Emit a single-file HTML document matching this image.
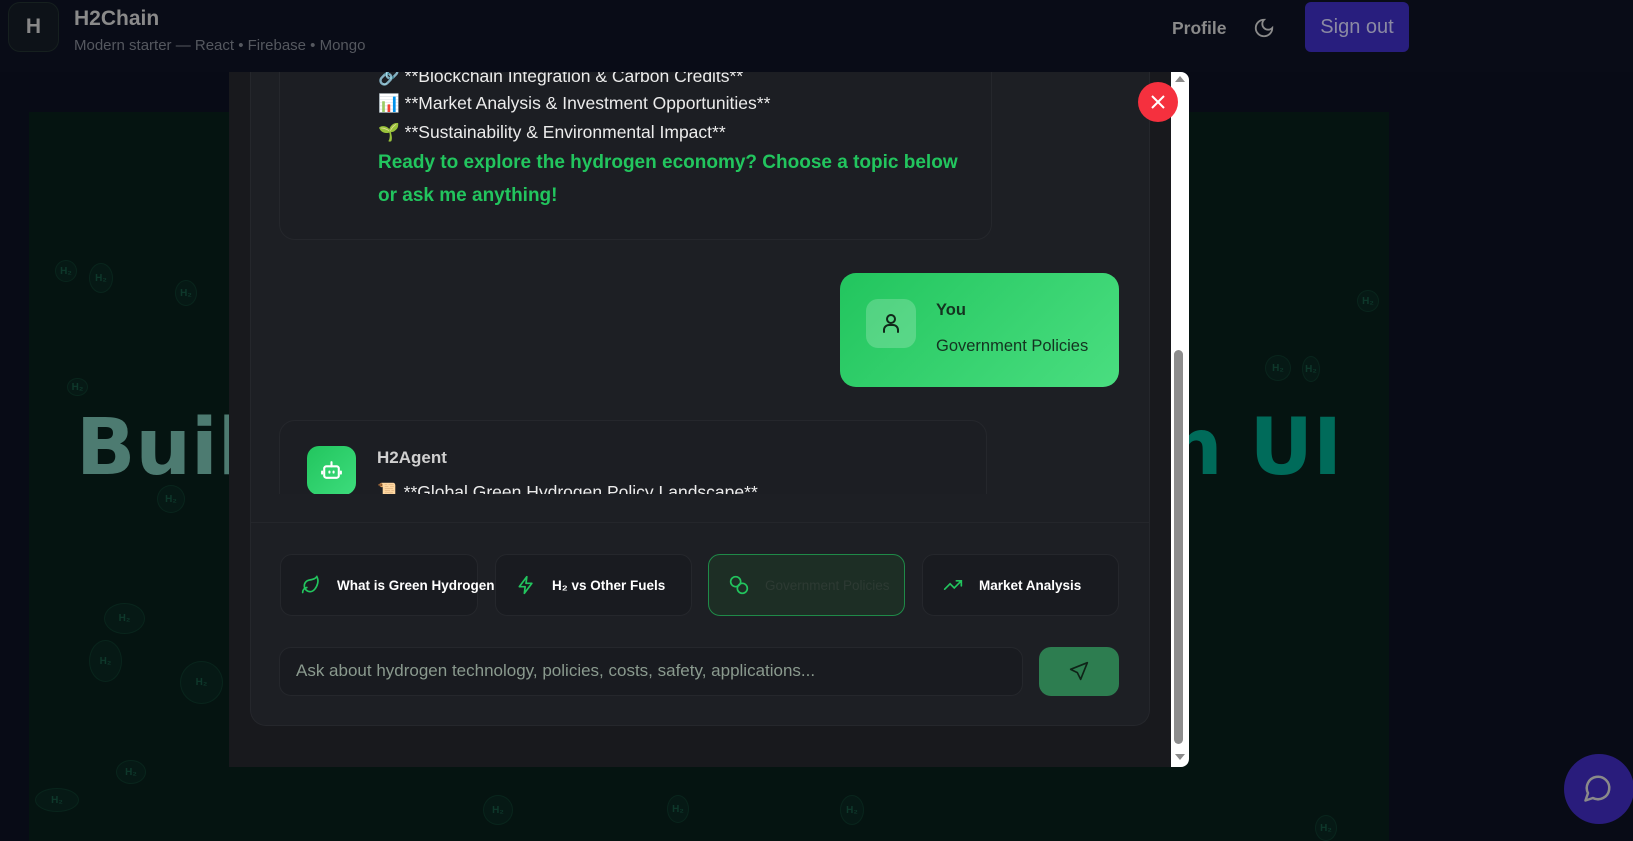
<!DOCTYPE html>
<html><head><meta charset="utf-8"><style>
*{box-sizing:border-box;margin:0;padding:0}
body{width:1633px;height:841px;overflow:hidden;background:#080b16;font-family:"Liberation Sans",sans-serif;position:relative}
.abs{position:absolute}
.hero{left:29px;top:112px;width:1360px;height:729px;background:#051411}
.title{top:409px;font-size:78px;font-weight:900;white-space:nowrap;line-height:1;font-family:"DejaVu Sans","Liberation Sans",sans-serif}
.bub{border:1px solid rgba(40,140,100,.1);background:rgba(20,80,60,.1);border-radius:50%;color:rgba(40,150,110,.25);font-size:10px;font-weight:bold;display:flex;align-items:center;justify-content:center}
.header{left:0;top:0;width:1633px;height:72px;background:#090c17}
.card{background:#1c1e23;border:1px solid #25272c;border-radius:16px}
.t{color:#ececec;font-size:17.5px;position:absolute;left:378px;white-space:nowrap}
.g{color:#22c55e;font-size:19px;font-weight:bold;position:absolute;left:378px;white-space:nowrap}
.chip{top:554px;height:62px;border:1px solid #25272c;border-radius:12px;background:#191b20;display:flex;align-items:center;padding-left:20px;color:#fff;font-size:13.5px;font-weight:bold;white-space:nowrap}
.chip svg{margin-right:16px;flex:none}
</style></head><body>
<div class="abs hero"></div>
<div class="abs title" style="left:76px;color:#4d7b71">Build Your Own</div>
<div class="abs title" style="right:291px;color:#006b5a">Green UI</div>
<div class="abs bub" style="left:67px;top:378px;width:21px;height:18px">H₂</div>
<div class="abs bub" style="left:104px;top:603px;width:41px;height:31px">H₂</div>
<div class="abs bub" style="left:89px;top:640px;width:33px;height:42px">H₂</div>
<div class="abs bub" style="left:180px;top:661px;width:43px;height:43px">H₂</div>
<div class="abs bub" style="left:116px;top:760px;width:30px;height:24px">H₂</div>
<div class="abs bub" style="left:35px;top:788px;width:44px;height:24px">H₂</div>
<div class="abs bub" style="left:157px;top:485px;width:28px;height:28px">H₂</div>
<div class="abs bub" style="left:55px;top:260px;width:22px;height:22px">H₂</div>
<div class="abs bub" style="left:89px;top:263px;width:24px;height:30px">H₂</div>
<div class="abs bub" style="left:175px;top:280px;width:22px;height:26px">H₂</div>
<div class="abs bub" style="left:1357px;top:290px;width:22px;height:22px">H₂</div>
<div class="abs bub" style="left:1265px;top:355px;width:26px;height:26px">H₂</div>
<div class="abs bub" style="left:1302px;top:356px;width:18px;height:26px">H₂</div>
<div class="abs bub" style="left:667px;top:795px;width:22px;height:28px">H₂</div>
<div class="abs bub" style="left:840px;top:795px;width:24px;height:30px">H₂</div>
<div class="abs bub" style="left:483px;top:795px;width:30px;height:30px">H₂</div>
<div class="abs bub" style="left:1315px;top:815px;width:22px;height:26px">H₂</div>

<div class="abs header"></div>
<div class="abs" style="left:8px;top:2px;width:51px;height:50px;border-radius:12px;background:#0d1218;border:1px solid #16201f;color:#888;font-weight:bold;font-size:21px;display:flex;align-items:center;justify-content:center">H</div>
<div class="abs" style="left:74px;top:7px;color:#8a8a8a;font-size:21px;font-weight:bold">H2Chain</div>
<div class="abs" style="left:74px;top:37px;color:#55585f;font-size:15px">Modern starter — React • Firebase • Mongo</div>
<div class="abs" style="left:1172px;top:18px;color:#8a8a8a;font-size:17.5px;font-weight:bold">Profile</div>
<svg class="abs" style="left:1253px;top:17px" width="22" height="22" viewBox="0 0 24 24" fill="none" stroke="#8a8a8a" stroke-width="2" stroke-linecap="round"><path d="M12 3a6 6 0 0 0 9 9 9 9 0 1 1-9-9z"/></svg>
<div class="abs" style="left:1305px;top:2px;width:104px;height:50px;border-radius:6px;background:#281e7e;color:#8b8aa3;font-size:20px;display:flex;align-items:center;justify-content:center">Sign out</div>

<!-- modal -->
<div class="abs" style="left:229px;top:72px;width:942px;height:695px;background:#18191d"></div>
<div class="abs" style="left:250px;top:72px;width:900px;height:654px;background:#1d1f24;border:1px solid #25272c;border-top:none;border-radius:0 0 16px 16px"></div>
<div class="abs" style="left:250px;top:72px;width:900px;height:422px;overflow:hidden">
 <div class="abs card" style="left:29px;top:-200px;width:713px;height:368px"></div>
 <div class="abs" style="left:128px;top:-6px;color:#ececec;font-size:17.5px;white-space:nowrap">🔗 **Blockchain Integration &amp; Carbon Credits**</div>
 <div class="abs" style="left:590px;top:201px;width:279px;height:114px;border-radius:16px;background:linear-gradient(135deg,#22c55e,#4ade80)">
  <div class="abs" style="left:26px;top:26px;width:50px;height:49px;border-radius:12px;background:rgba(255,255,255,.2)"></div>
  <svg class="abs" style="left:39px;top:38px" width="24" height="24" viewBox="0 0 24 24" fill="none" stroke="#10281a" stroke-width="2" stroke-linecap="round"><circle cx="12" cy="8" r="4"/><path d="M5 21v-2a5 5 0 0 1 5-5h4a5 5 0 0 1 5 5v2"/></svg>
  <div class="abs" style="left:96px;top:28px;color:#143320;font-size:16.5px;font-weight:bold">You</div>
  <div class="abs" style="left:96px;top:64px;color:#143320;font-size:16.5px">Government Policies</div>
 </div>
 <div class="abs card" style="left:29px;top:348px;width:708px;height:200px">
  <div class="abs" style="left:27px;top:25px;width:49px;height:49px;border-radius:12px;background:linear-gradient(135deg,#22c55e,#3ddc7c)"></div>
  <svg class="abs" style="left:39px;top:37px" width="25" height="25" viewBox="0 0 24 24" fill="none" stroke="#fff" stroke-width="2" stroke-linecap="round"><rect x="5" y="8" width="14" height="11" rx="2"/><path d="M12 8V4M10 13v1M14 13v1M3 13v2M21 13v2"/></svg>
  <div class="abs" style="left:97px;top:27px;color:#d0d0d0;font-size:17px;font-weight:bold">H2Agent</div>
  <div class="abs" style="left:97px;top:61px;color:#ececec;font-size:17.5px;white-space:nowrap">📜 **Global Green Hydrogen Policy Landscape**</div>
 </div>
</div>
<div class="t" style="top:93px">📊 **Market Analysis &amp; Investment Opportunities**</div>
<div class="t" style="top:122px">🌱 **Sustainability &amp; Environmental Impact**</div>
<div class="g" style="top:152px">Ready to explore the hydrogen economy? Choose a topic below</div>
<div class="g" style="top:185px">or ask me anything!</div>

<div class="abs" style="left:251px;top:522px;width:898px;height:1px;background:#24262b"></div>
<div class="abs chip" style="left:280px;width:198px"><svg width="20" height="20" viewBox="0 0 24 24" fill="none" stroke="#22c55e" stroke-width="2" stroke-linecap="round"><path d="M11 20A7 7 0 0 1 9.8 6.1C15.5 5 17 4.5 19 2c1 2 2 4.2 1 8-1.4 5.6-5 10-9 10z"/><path d="M2 21c0-3 1.9-5.4 5-6"/></svg>What is Green Hydrogen?</div>
<div class="abs chip" style="left:495px;width:197px"><svg width="20" height="20" viewBox="0 0 24 24" fill="none" stroke="#22c55e" stroke-width="2" stroke-linejoin="round"><path d="M13 2 4 14h7l-1 8 9-12h-7z"/></svg>H₂ vs Other Fuels</div>
<div class="abs chip" style="left:708px;width:197px;background:#1d2e25;border-color:#1f8a48;color:#2d3a33;font-weight:normal"><svg width="20" height="20" viewBox="0 0 24 24" fill="none" stroke="#22c55e" stroke-width="2"><circle cx="8" cy="8" r="6"/><circle cx="16" cy="16" r="6"/></svg>Government Policies</div>
<div class="abs chip" style="left:922px;width:197px"><svg width="20" height="20" viewBox="0 0 24 24" fill="none" stroke="#22c55e" stroke-width="2" stroke-linecap="round"><path d="M22 7l-8.5 8.5-5-5L2 17M16 7h6v6"/></svg>Market Analysis</div>
<div class="abs" style="left:279px;top:647px;width:744px;height:49px;border:1px solid #25272c;border-radius:12px;background:#191b20;color:#8a9a8e;font-size:17px;padding:13px 16px;white-space:nowrap">Ask about hydrogen technology, policies, costs, safety, applications...</div>
<div class="abs" style="left:1039px;top:647px;width:80px;height:49px;border-radius:12px;background:#2d7d50"></div>
<svg class="abs" style="left:1069px;top:661px" width="20" height="20" viewBox="0 0 24 24" fill="none" stroke="#0f2418" stroke-width="2" stroke-linejoin="round"><path d="M22 2 2 10l8 4 4 8z"/></svg>

<div class="abs" style="left:1171px;top:72px;width:18px;height:695px;background:#fff;border-radius:0 8px 8px 0"></div>
<div class="abs" style="left:1175px;top:76px;width:0;height:0;border-left:5px solid transparent;border-right:5px solid transparent;border-bottom:6px solid #8a8a8a"></div>
<div class="abs" style="left:1174px;top:350px;width:9px;height:394px;background:#8d8d8d;border-radius:5px"></div>
<div class="abs" style="left:1175px;top:754px;width:0;height:0;border-left:5px solid transparent;border-right:5px solid transparent;border-top:6px solid #8a8a8a"></div>
<div class="abs" style="left:1138px;top:82px;width:40px;height:40px;border-radius:50%;background:#f5303e"></div>
<svg class="abs" style="left:1149px;top:93px" width="18" height="18" viewBox="0 0 18 18" stroke="#fff" stroke-width="2"><path d="M3 3l12 12M15 3 3 15"/></svg>
<div class="abs" style="left:1564px;top:754px;width:70px;height:70px;border-radius:50%;background:#291c7c"></div>
<svg class="abs" style="left:1583px;top:773px" width="30" height="30" viewBox="0 0 24 24" fill="none" stroke="#8a8a8a" stroke-width="2" stroke-linejoin="round"><path d="M7.9 20A9 9 0 1 0 4 16.1L2 22z"/></svg>
</body></html>
